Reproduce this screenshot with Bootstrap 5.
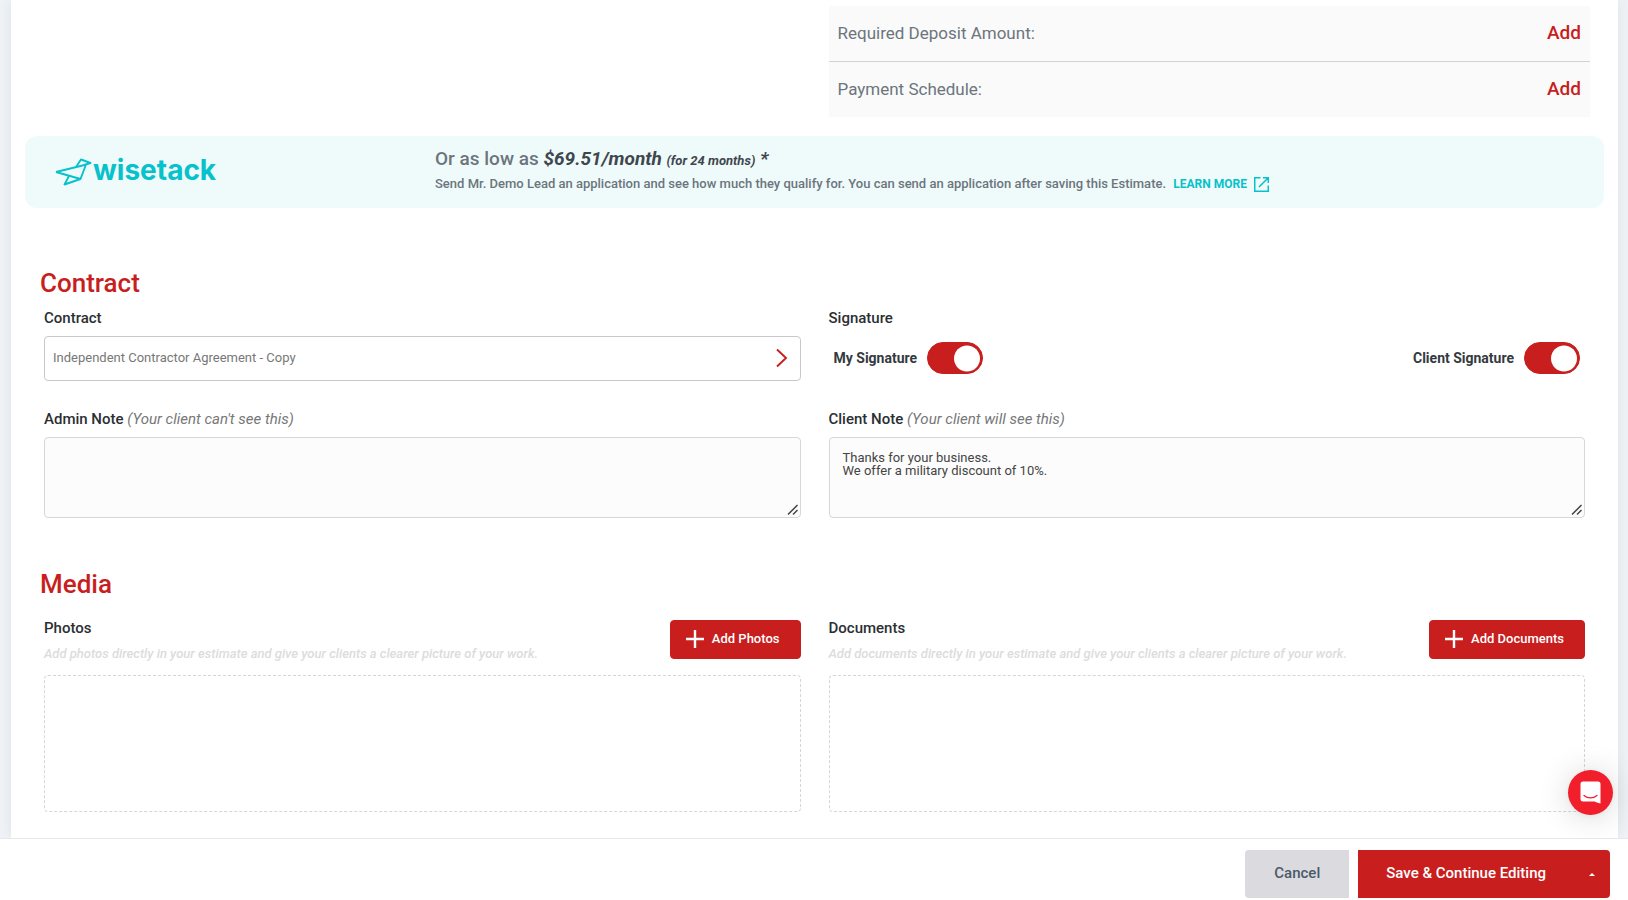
<!DOCTYPE html>
<html lang="en">
<head>
<meta charset="utf-8">
<meta name="viewport" content="width=device-width, initial-scale=1">
<title>Estimate</title>
<link href="https://cdn.jsdelivr.net/npm/bootstrap@5.3.0/dist/css/bootstrap.min.css" rel="stylesheet">
<style>
  :root { --brand: #c81e1e; --teal: #07c1cb; --slate: #6c757d; }
  body { font-family: Roboto, "Liberation Sans", sans-serif; font-size: 15px; line-height: 20px; color: #2b2f33; background: #eff3f8; }
  .sheet { background: #fff; margin: 0 10px 0 11px; padding: 6px 14px 26px; box-shadow: 0 0 12px rgba(70, 90, 100, .1); }
  .row { --bs-gutter-x: 28px; }
  .terms { padding-right: 28px; }
  .terms-line { background: #fafafa; height: 55px; padding: 0 9px 2px; font-size: 17px; color: var(--slate); }
  .terms-line + .terms-line { border-top: 1px solid #d0d2d4; height: 56px; }
  .terms-line a { color: var(--brand); font-size: 19px; font-weight: 500; }
  .finance { background: #effbfb; border-radius: 12px; margin-top: 19px; height: 72px; padding: 0 30px; color: var(--slate); }
  .finance-logo { width: 380px; color: var(--teal); }
  .finance-logo span { font: 700 28px/36px Inter, sans-serif; }
  .finance-title { font-size: 19px; line-height: 28px; font-weight: 500; padding-top: 9px; }
  .finance-title em { color: #3f474e; font-weight: 700; }
  .finance-title .term { font-size: 13px; }
  .finance-note { font-size: 13px; line-height: 18px; font-weight: 500; }
  .finance-note a { color: var(--teal); font-weight: 700; font-size: 12px; }
  .section-block { padding: 0 19px; }
  h2 { color: var(--brand); font-size: 26px; line-height: 32px; font-weight: 500; margin: 0 -4px; }
  .contract-title { padding-top: 11px; margin-bottom: 9px; }
  .media-title { padding-top: 2px; }
  .field-name { font-weight: 500; display: block; }
  .field-name em { font-weight: 400; color: #777; }
  .picker { height: 45px; border: 1px solid #c6c8ca; border-radius: 4px; background: #fff; padding: 0 12px 1px 8px; font-size: 13px; color: #777; }
  .notes { margin-top: 28px; }
  textarea.form-control { height: 81px; margin-top: 8px; padding: 13px; border-color: #d5d7d9; border-radius: 4px; background: #fcfcfc; font-size: 13px; line-height: 13px; color: #444; }
  textarea::-webkit-resizer { background: url("data:image/svg+xml,%3Csvg xmlns='http://www.w3.org/2000/svg' viewBox='0 0 15 15'%3E%3Cpath d='M3 12.500 12.500 3M8 12.500 12.500 8' fill='none' stroke='%23444' stroke-width='1.500'/%3E%3C/svg%3E") right bottom / 15px 15px no-repeat; }
  .signatures { padding: 2px 5px 0; }
  .sign-item { gap: 10px; }
  .sign-label { font-size: 14px; font-weight: 700; color: #343a40; }
  .form-check-input.sign-toggle { width: 56px; height: 32px; margin: 0; border-radius: 16px; background-size: 32px; box-shadow: none;
    background-image: url("data:image/svg+xml,%3Csvg xmlns='http://www.w3.org/2000/svg' viewBox='0 0 32 32'%3E%3Ccircle cx='17' cy='16.5' r='13' fill='white'/%3E%3C/svg%3E"); }
  .form-check-input.sign-toggle:checked { background-color: var(--brand); border-color: var(--brand); background-position: right 0 center;
    background-image: url("data:image/svg+xml,%3Csvg xmlns='http://www.w3.org/2000/svg' viewBox='0 0 32 32'%3E%3Ccircle cx='17' cy='16.5' r='13' fill='white'/%3E%3C/svg%3E"); }
  .media-name { line-height: 16px; }
  .media-hint { font-size: 13px; font-style: italic; font-weight: 500; color: #dcdcdc; margin: 8px 0 0; }
  .btn-brand { --bs-btn-color: #fff; --bs-btn-bg: var(--brand); --bs-btn-border-color: var(--brand); --bs-btn-hover-color: #fff; --bs-btn-hover-bg: #ad1919; --bs-btn-hover-border-color: #ad1919; }
  .add-btn { height: 39px; border-radius: 4px; padding: 0 20px 2px 15px; font-size: 13px; font-weight: 500; gap: 8px; }
  .drop-area { border: 1px dashed #d6d6d6; border-radius: 4px; height: 137px; margin-top: 11px; }
  .action-bar { background: #fff; border-top: 1px solid #e6e8ea; padding: 11px 18px 2px; gap: 9px; z-index: 5; }
  .action-bar .btn { height: 48px; font-size: 15px; border: 0; border-radius: 0; padding: 0 28px 2px; }
  .action-bar .btn-cancel { width: 104px; font-weight: 500; padding: 0 0 2px; background: #dadadf; color: #4b5a6a; border-radius: 4px 0 0 4px; }
  .action-bar .btn-save { font-weight: 500; }
  .action-bar .btn-more { border-radius: 0 4px 4px 0; padding: 0 15px; }
  .caret-up { border: 3px solid transparent; border-top: 0; border-bottom-color: #fff; }
  .chat { right: 15px; bottom: 85px; width: 45px; height: 45px; background: #f01f2b; box-shadow: 0 1px 6px rgba(0,0,0,.06), 0 2px 32px rgba(0,0,0,.16); z-index: 4; }
</style>
</head>
<body class="min-vh-100 d-flex flex-column">
<main class="sheet flex-grow-1">
  <div class="row">
    <div class="col-6 offset-6 terms">
      <div class="terms-line d-flex align-items-center justify-content-between"><span>Required Deposit Amount:</span><a href="#" class="text-decoration-none">Add</a></div>
      <div class="terms-line d-flex align-items-center justify-content-between"><span>Payment Schedule:</span><a href="#" class="text-decoration-none">Add</a></div>
    </div>
  </div>

  <section class="finance d-flex">
    <div class="finance-logo d-flex flex-shrink-0 pt-3">
      <svg width="38" height="30" viewBox="0 0 38 30" fill="none" stroke="currentColor" stroke-width="1.9" stroke-linejoin="round" class="mt-1" aria-hidden="true"><path d="M1 16 27.500 9.500l8-2.500-9.500-3.500-5 7.500M1 16 25.500 23 31 8.500M14 20 9.500 28.500 25.500 23"/></svg>
      <span>wisetack</span>
    </div>
    <div>
      <div class="finance-title">Or as low as <em>$69.51/month <span class="term">(for 24 months)</span> *</em></div>
      <div class="finance-note">Send Mr. Demo Lead an application and see how much they qualify for. You can send an application after saving this Estimate.
        <a href="#" class="text-decoration-none ms-1">LEARN MORE
          <svg class="ms-1" width="15" height="15" viewBox="0 0 15 15" fill="none" stroke="currentColor" stroke-width="1.5" aria-hidden="true"><path d="M6.500 .75H.75v13.500h13.500V8.500M9 .75h5.250V6M14.250 .75 5 10"/></svg></a>
      </div>
    </div>
  </section>

  <section class="section-block pt-5">
    <h2 class="contract-title">Contract</h2>
    <div class="row">
      <div class="col-6">
        <label class="field-name mb-2" for="contract">Contract</label>
        <button id="contract" type="button" class="picker w-100 d-flex align-items-center justify-content-between">Independent Contractor Agreement - Copy
          <svg width="13" height="20" viewBox="0 0 13 20" fill="none" stroke="#c81e1e" stroke-width="1.900" aria-hidden="true"><path d="M2 1.500 11 10 2 18.500"/></svg></button>
      </div>
      <div class="col-6">
        <div class="field-name mb-2">Signature</div>
        <div class="signatures d-flex justify-content-between">
          <div class="sign-item form-switch p-0 d-flex align-items-center mt-1"><label class="sign-label" for="mine">My Signature</label><input class="form-check-input sign-toggle" type="checkbox" role="switch" id="mine" checked></div>
          <div class="sign-item form-switch p-0 d-flex align-items-center mt-1"><label class="sign-label" for="theirs">Client Signature</label><input class="form-check-input sign-toggle" type="checkbox" role="switch" id="theirs" checked></div>
        </div>
      </div>
    </div>
    <div class="row notes">
      <div class="col-6">
        <label class="field-name" for="admin">Admin Note <em>(Your client can't see this)</em></label>
        <textarea id="admin" class="form-control"></textarea>
      </div>
      <div class="col-6">
        <label class="field-name" for="client">Client Note <em>(Your client will see this)</em></label>
        <textarea id="client" class="form-control">Thanks for your business.
We offer a military discount of 10%.</textarea>
      </div>
    </div>
  </section>

  <section class="section-block pt-5">
    <h2 class="media-title">Media</h2>
    <div class="row mt-3 pt-1">
      <div class="col-6">
        <div class="d-flex justify-content-between">
          <div><div class="field-name media-name">Photos</div><p class="media-hint">Add photos directly in your estimate and give your clients a clearer picture of your work.</p></div>
          <button type="button" class="btn btn-brand add-btn d-flex align-items-center flex-shrink-0"><svg width="18" height="18" viewBox="0 0 18 18" stroke="#fff" stroke-width="2.400" aria-hidden="true"><path d="M9 0v18M0 9h18"/></svg>Add Photos</button>
        </div>
        <div class="drop-area"></div>
      </div>
      <div class="col-6">
        <div class="d-flex justify-content-between">
          <div><div class="field-name media-name">Documents</div><p class="media-hint">Add documents directly in your estimate and give your clients a clearer picture of your work.</p></div>
          <button type="button" class="btn btn-brand add-btn d-flex align-items-center flex-shrink-0"><svg width="18" height="18" viewBox="0 0 18 18" stroke="#fff" stroke-width="2.400" aria-hidden="true"><path d="M9 0v18M0 9h18"/></svg>Add Documents</button>
        </div>
        <div class="drop-area"></div>
      </div>
    </div>
  </section>
</main>

<footer class="action-bar sticky-bottom d-flex justify-content-end">
  <button type="button" class="btn btn-cancel">Cancel</button>
  <div class="d-flex">
    <button type="button" class="btn btn-brand btn-save">Save &amp; Continue Editing</button>
    <button type="button" class="btn btn-brand btn-more d-flex align-items-center" aria-label="More save options"><span class="caret-up"></span></button>
  </div>
</footer>

<button type="button" class="chat position-fixed rounded-circle border-0 p-0 d-flex align-items-center justify-content-center" aria-label="Open chat">
  <svg width="21" height="23" viewBox="0 0 21 23" aria-hidden="true"><path fill="#fff" d="M3 .5h15a2.500 2.500 0 0 1 2.500 2.500v19.500c-2-.3-4-1-6-2H3A2.500 2.500 0 0 1 .5 18V3A2.500 2.500 0 0 1 3 .5z"/><path d="M4 14.500c3.800 3.200 9.200 3.200 13 0" fill="none" stroke="#f01f2b" stroke-width="1.200" stroke-linecap="round"/></svg>
</button>
<script src="https://cdn.jsdelivr.net/npm/bootstrap@5.3.0/dist/js/bootstrap.bundle.min.js"></script>
</body>
</html>
